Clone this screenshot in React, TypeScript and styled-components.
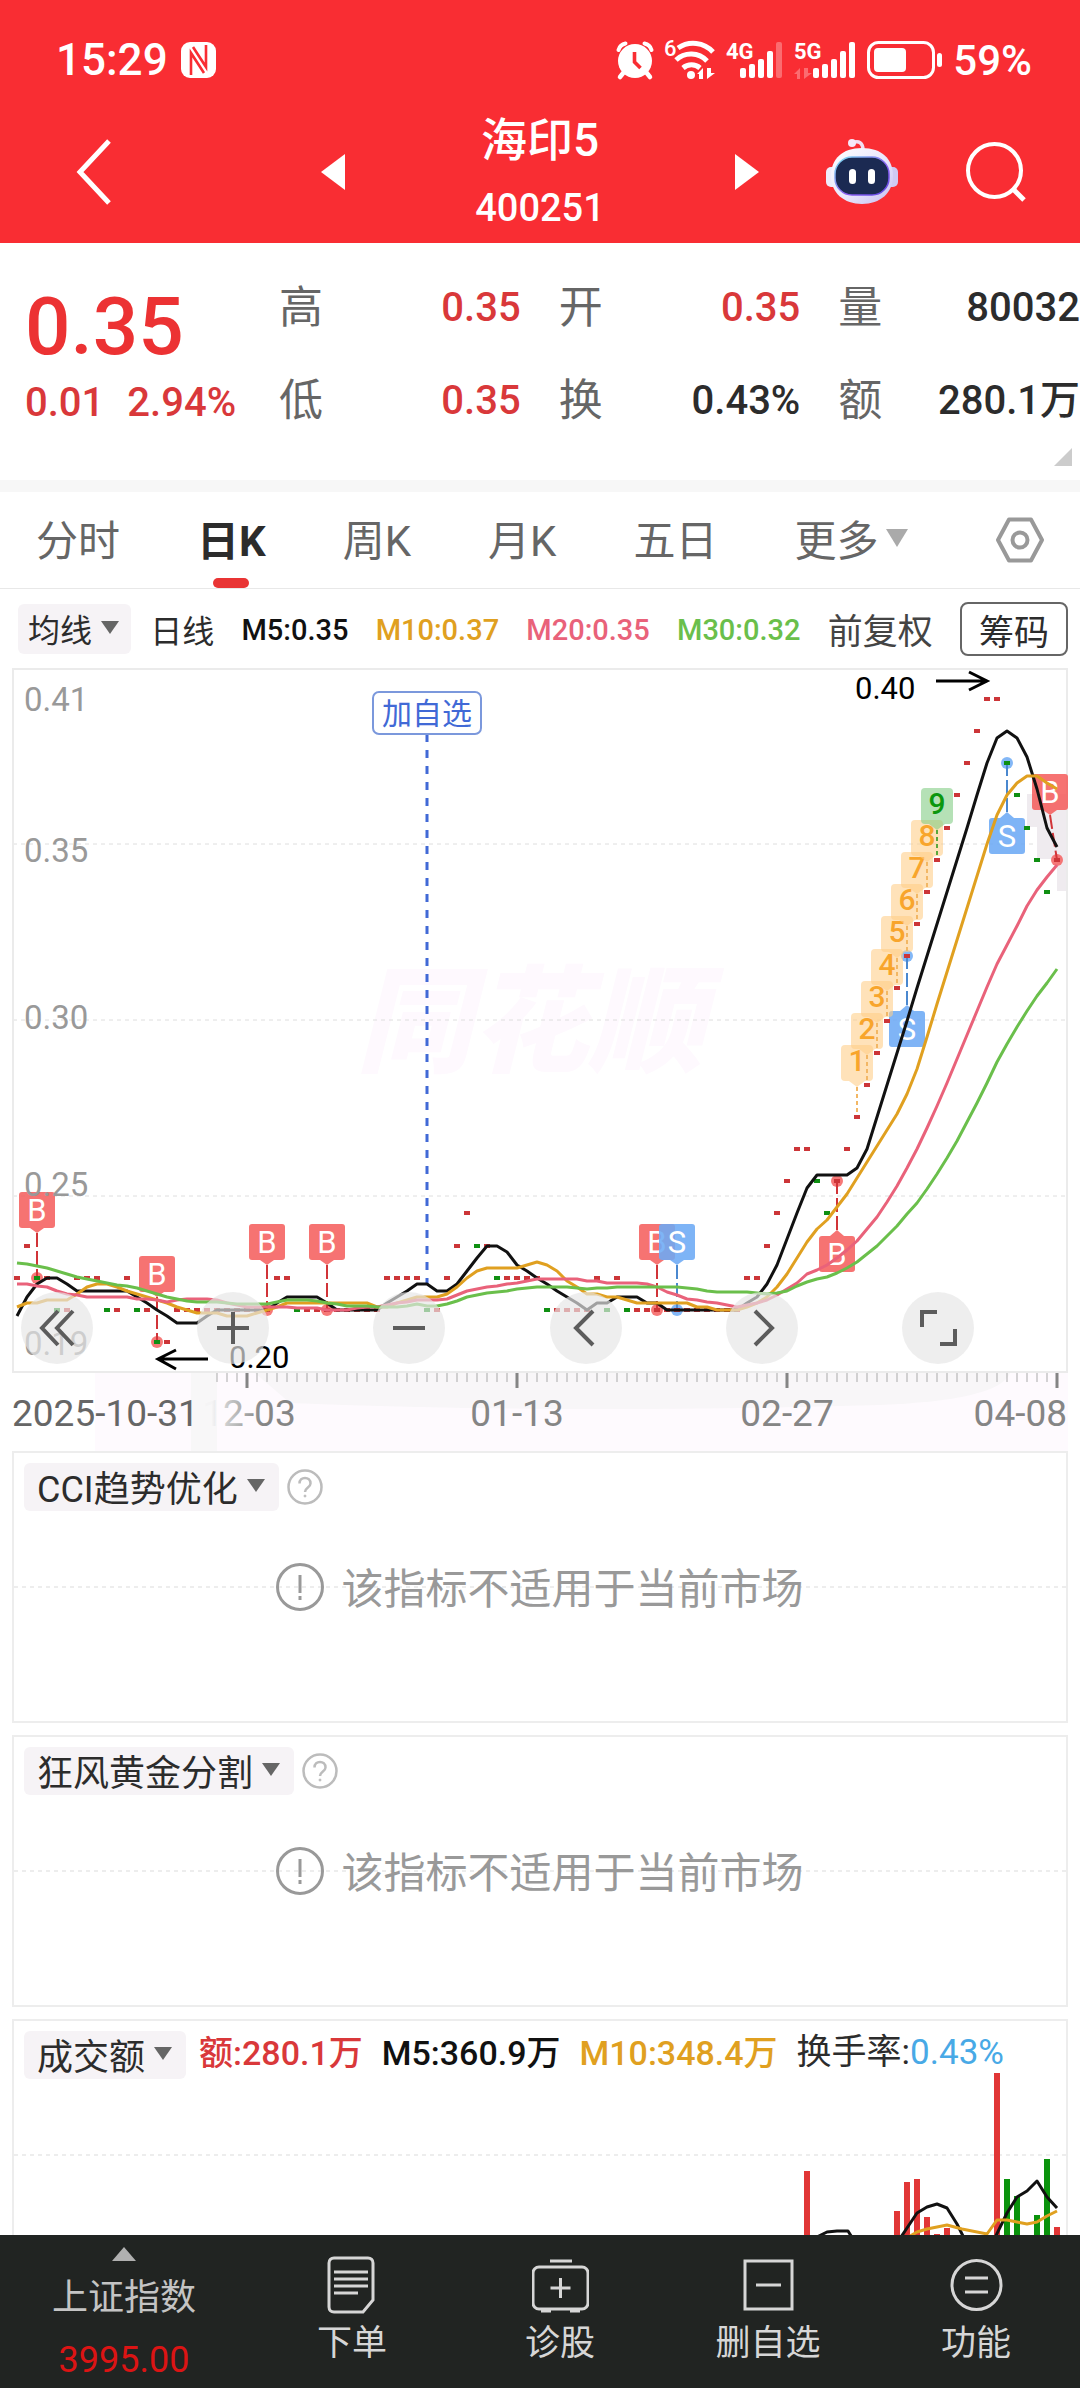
import React from "react";
import styled, { createGlobalStyle, css } from "styled-components";

const UP = "#d9383a";
const DOWN = "#0f8f12";
const AMBER = "#e0a020";
const PINK = "#e9627a";
const LIME = "#6abf4b";

const Global = createGlobalStyle`
  *, *::before, *::after { box-sizing: border-box; }
  body {
    margin: 0;
    background: #fff;
    color: #2c2c2c;
    font-family: Roboto, "Noto Sans CJK SC", sans-serif;
  }
  button {
    margin: 0;
    padding: 0;
    border: 0;
    background: none;
    color: inherit;
    font: inherit;
  }
  svg { display: block; }
`;

/* ---------- shell ---------- */

const Shell = styled.div`
  display: flex;
  flex-direction: column;
  height: 100vh;
`;

const Header = styled.header`
  flex: none;
  background: #f92d33;
  color: #fff;
`;

const StatusBar = styled.div`
  display: flex;
  align-items: center;
  justify-content: space-between;
  height: 100px;
  padding: 20px 48px 0 56px;
  font-weight: 500;
`;

const StatusGroup = styled.div<{ $gap: number; $size: number }>`
  display: flex;
  align-items: center;
  gap: ${(p) => p.$gap}px;
  font-size: ${(p) => p.$size}px;

  & > svg { overflow: visible; }
`;

const NavBar = styled.div`
  display: grid;
  grid-template-columns: 1fr auto 1fr;
  align-items: center;
  height: 143px;
  padding: 0 54px;
`;

const IconButton = styled.button<{ $width: number }>`
  display: flex;
  justify-content: center;
  width: ${(p) => p.$width}px;
`;

const StockSwitch = styled.div`
  display: flex;
  align-items: center;
  justify-content: space-between;
  width: 438px;
`;

const StockTitle = styled.h1`
  margin: 0;
  text-align: center;
  font-size: 46px;
  font-weight: 500;
  line-height: 72px;
`;

const StockCode = styled.span`
  display: block;
  font-size: 38px;
  line-height: 64px;
`;

const NavTools = styled.div`
  display: flex;
  align-items: center;
  justify-content: flex-end;
  gap: 68px;
`;

/* ---------- quote ---------- */

const Quote = styled.section`
  position: relative;
  display: grid;
  grid-template-columns: 279px 1fr;
  flex: none;
  height: 249px;
  border-bottom: 12px solid #f7f7f7;
`;

const PriceBlock = styled.div`
  padding: 36px 0 0 25px;
  color: ${UP};
  font-weight: 500;
`;

const Price = styled.div`
  color: #ec3233;
  font-size: 80px;
  line-height: 96px;
`;

const Change = styled.div`
  display: flex;
  gap: 23px;
  font-size: 40px;
  line-height: 56px;
`;

const Stats = styled.dl`
  display: grid;
  grid-template-columns: repeat(3, 1fr);
  grid-auto-rows: 93px;
  column-gap: 38px;
  margin: 0;
  padding-top: 18px;
`;

const Stat = styled.div`
  display: flex;
  align-items: center;
  justify-content: space-between;
`;

const StatName = styled.dt`
  color: #666;
  font-size: 44px;
  line-height: 60px;
`;

const StatValue = styled.dd<{ $up?: boolean }>`
  margin: 0;
  color: ${(p) => (p.$up ? UP : "#2c2c2c")};
  font-size: 40px;
  font-weight: 500;
  line-height: 60px;
`;

const Corner = styled.span`
  position: absolute;
  right: 8px;
  bottom: 14px;
  border-left: 18px solid transparent;
  border-bottom: 18px solid #ccc;
`;

/* ---------- tabs ---------- */

const Tabs = styled.nav`
  display: flex;
  flex: none;
  gap: 77px;
  height: 97px;
  padding: 0 36px;
  border-bottom: 1px solid #e8e8e8;
`;

const Tab = styled.button<{ $active?: boolean }>`
  position: relative;
  display: flex;
  align-items: center;
  gap: 8px;
  padding-bottom: 5px;
  color: #666;
  font-size: 42px;
  ${(p) =>
    p.$active &&
    css`
      color: #2c2c2c;
      font-weight: 700;
      &::after {
        content: "";
        position: absolute;
        bottom: 0;
        left: 50%;
        width: 36px;
        height: 10px;
        margin-left: -18px;
        border-radius: 5px;
        background: #e93434;
      }
    `}
`;

const SettingsButton = styled.button`
  margin-left: auto;
`;

const Caret = styled.span<{ $size?: number; $color?: string }>`
  width: 0;
  border: ${(p) => p.$size ?? 9}px solid transparent;
  border-bottom-width: 0;
  border-top: ${(p) => (p.$size ? 18 : 13)}px solid ${(p) => p.$color ?? "#666"};
`;

/* ---------- main ---------- */

const Main = styled.main`
  flex: 1;
  min-height: 0;
  padding: 0 12px;
  overflow: hidden;
`;

const Legend = styled.div`
  display: flex;
  align-items: center;
  justify-content: space-between;
  height: 79px;
  padding-left: 6px;
  font-size: 29px;
  font-weight: 500;
`;

const Chip = styled.button<{ $compact?: boolean }>`
  display: flex;
  flex: none;
  align-items: center;
  gap: 9px;
  height: ${(p) => (p.$compact ? 50 : 48)}px;
  margin-right: ${(p) => (p.$compact ? -8 : 0)}px;
  padding: ${(p) => (p.$compact ? "0 12px 2px 10px" : "0 14px 3px 13px")};
  border-radius: 6px;
  background: #f6f3f6;
  font-size: ${(p) => (p.$compact ? 32 : 36)}px;
  font-weight: 400;
`;

const Reading = styled.span<{ $color?: string }>`
  color: ${(p) => p.$color ?? "#111"};
  line-height: 40px;
  white-space: nowrap;
`;

const LegendReading = styled(Reading)`
  padding-top: 3px;
`;

const Period = styled.span`
  font-size: 32px;
  font-weight: 400;
`;

const AdjustButton = styled.button`
  color: #444;
  font-size: 35px;
  font-weight: 400;
`;

const OutlineButton = styled.button`
  height: 54px;
  padding: 0 17px 3px;
  border: 2px solid #666;
  border-radius: 8px;
  font-size: 35px;
  font-weight: 400;
`;

const ChartArea = styled.div`
  position: relative;
`;

const ChartSvg = styled.svg`
  width: 100%;
  height: auto;
`;

const ChartControls = styled.div`
  position: absolute;
  inset: auto 94px 87px 9px;
  display: flex;
  justify-content: space-between;
`;

const RoundButton = styled.button`
  display: grid;
  place-items: center;
  width: 72px;
  height: 72px;
  border-radius: 50%;
  background: rgba(230, 230, 230, 0.68);
`;

const Panel = styled.section`
  display: grid;
  grid-template-rows: 48px 1fr;
  height: 272px;
  margin-bottom: 12px;
  padding-top: 10px;
  border: 2px solid #ededed;
  background:
    repeating-linear-gradient(90deg, #ededed 0 4px, transparent 4px 8px) 0 50% / 100% 2px
    no-repeat padding-box;
`;

const PanelHead = styled.div`
  display: flex;
  align-items: center;
  gap: 8px;
  padding-left: 10px;
`;

const Notice = styled.p`
  display: flex;
  align-items: center;
  justify-content: center;
  gap: 17px;
  margin: 0;
  padding-bottom: 58px;
  color: #999;
  font-size: 42px;
`;

const NoticeText = styled.span`
  padding-bottom: 4px;
`;

const VolumePanel = styled.section`
  display: grid;
  grid-template-areas: "stack";
  align-items: start;
`;

const VolumeHead = styled.div`
  z-index: 1;
  display: flex;
  grid-area: stack;
  align-items: center;
  gap: 19px;
  height: 48px;
  margin: 12px 0 0 12px;
  font-size: 34px;
  font-weight: 500;

  & > button { margin-right: -6px; }
  & > span { padding-bottom: 5px; }
`;

const TurnoverRate = styled(Reading)`
  font-size: 35px;
  font-weight: 400;
`;

const VolumeSvg = styled.svg`
  grid-area: stack;
  width: 100%;
  height: auto;
`;

/* ---------- footer ---------- */

const Footer = styled.footer`
  display: grid;
  grid-template-columns: 248fr repeat(4, 208fr);
  flex: none;
  height: 153px;
  background: #212422;
  color: #d6d6d6;
`;

const FooterItem = styled.button`
  display: flex;
  flex-direction: column;
  align-items: center;
  padding-top: 21px;
  font-size: 35px;
  line-height: 56px;

  & > svg { margin-bottom: 2px; }
`;

const IndexItem = styled.button`
  display: flex;
  flex-direction: column;
  align-items: center;
  padding-top: 12px;
  color: #c4c4c4;
  font-size: 36px;
  line-height: 62px;
`;

const IndexCaret = styled.span`
  border: 12px solid transparent;
  border-top-width: 0;
  border-bottom: 14px solid #b0b0b0;
  margin-bottom: 6px;
`;

const IndexValue = styled.span`
  color: #dc1414;
`;

/* ---------- icons ---------- */

const NfcIcon = () => (
  <svg width="35" height="36" viewBox="0 0 35 36" fill="none">
    <rect width="35" height="36" rx="9" fill="#fff" />
    <path d="M10 33V11l13 20M25 3v22L12 5" stroke="#f92d33" strokeWidth="2.600" />
  </svg>
);

const AlarmIcon = () => (
  <svg width="38" height="38" viewBox="0 0 38 38">
    <g stroke="#fff" strokeLinecap="round" fill="none">
      <path d="M2.500 9a9 9 0 0 1 7-6.500M35.500 9a9 9 0 0 0-7-6.500" strokeWidth="4" />
      <path d="M8 31l-4 5M30 31l4 5" strokeWidth="4.500" />
    </g>
    <circle cx="19" cy="20" r="17" fill="#fff" />
    <path d="M18.500 11v10l6 6" stroke="#f92d33" strokeWidth="3.600" fill="none" />
  </svg>
);

const WifiIcon = () => (
  <svg width="52" height="42" viewBox="0 0 52 42" fill="none" stroke="#fff">
    <text x="0" y="17" fontSize="22" fontWeight="500" fill="#fff" stroke="none">6</text>
    <g strokeWidth="5">
      <path d="M14 9a27 27 0 0 1 35 4" />
      <path d="M12 21a22 22 0 0 1 31 1" />
      <path d="M19 29a13 13 0 0 1 17 0" />
    </g>
    <circle cx="27" cy="36" r="4" fill="#fff" stroke="none" />
    <path d="M33 35l6-6v11h-4v-5zM43 29v11l8-6h-4v-5z" fill="#fff" stroke="none" />
  </svg>
);

const SignalIcon = ({ label, weak }: { label: string; weak?: boolean }) => (
  <svg width={weak ? 58 : 63} height="40" viewBox={weak ? "0 0 58 40" : "0 0 63 40"} fill="#fff">
    <text x="0" y="19" fontSize="22" fontWeight="700">{label}</text>
    {!weak && <path d="M0 34l6-6v11H3v-5zM10 28v11l8-6h-4v-5z" opacity="0.3" />}
    {[28, 24, 19, 11, 2].map((y, i) => (
      <rect
        key={y}
        x={(weak ? 14 : 19) + i * 9}
        y={y}
        width="6"
        height={38 - y}
        rx="2"
        opacity={weak && i === 4 ? 0.3 : 1}
      />
    ))}
  </svg>
);

const BatteryIcon = () => (
  <svg width="76" height="38" viewBox="0 0 76 38" fill="none">
    <rect x="1.500" y="1.500" width="65" height="35" rx="10" stroke="#fff" strokeWidth="3" />
    <rect x="7" y="7" width="32" height="24" rx="4" fill="#fff" />
    <rect x="70" y="12" width="5" height="14" rx="2.500" fill="#fff" />
  </svg>
);

const BackIcon = () => (
  <svg width="36" height="66" viewBox="0 0 36 66" fill="none" stroke="#fff" strokeWidth="5">
    <path d="M33 2L4 33l29 31" />
  </svg>
);

const StepIcon = ({ next }: { next?: boolean }) => (
  <svg width="24" height="36" viewBox="0 0 24 36" fill="#fff">
    <path d={next ? "M0 0l24 18L0 36z" : "M24 0L0 18l24 18z"} />
  </svg>
);

const RobotIcon = () => (
  <svg width="72" height="67" viewBox="0 0 72 67">
    <defs>
      <linearGradient id="shell" x1="0" y1="0" x2="1" y2="1">
        <stop offset="0" stopColor="#fff" />
        <stop offset="0.55" stopColor="#e9e6fb" />
        <stop offset="1" stopColor="#c4bdf0" />
      </linearGradient>
      <linearGradient id="rim" x1="0" y1="0" x2="1" y2="1">
        <stop offset="0" stopColor="#7fe3f2" />
        <stop offset="0.6" stopColor="#8a5cf0" />
        <stop offset="1" stopColor="#5b46e0" />
      </linearGradient>
    </defs>
    <rect x="0" y="29" width="12" height="20" rx="5" fill="#efecfb" />
    <rect x="60" y="29" width="12" height="20" rx="5" fill="#cfc9f2" />
    <path d="M26 5c7-3 11 0 11 7" stroke="#f2dff2" strokeWidth="3.500" fill="none" />
    <circle cx="26" cy="5" r="4" fill="#f6e8f8" />
    <path d="M36 10c20 0 31 11 31 28S54 66 36 66 5 55 5 38 16 10 36 10z" fill="url(#shell)" />
    <rect x="9" y="19" width="54" height="38" rx="17" fill="#1b2a52" stroke="url(#rim)" strokeWidth="1.500" />
    <rect x="23" y="31" width="7" height="15" rx="3.500" fill="#fff" />
    <rect x="42" y="31" width="7" height="15" rx="3.500" fill="#fff" />
  </svg>
);

const SearchIcon = () => (
  <svg width="60" height="60" viewBox="0 0 60 60" fill="none" stroke="#fff" strokeWidth="4">
    <circle cx="28.500" cy="28.500" r="26.500" />
    <path d="M47 47l11 11" strokeWidth="5" />
  </svg>
);

const HexIcon = () => (
  <svg width="48" height="46" viewBox="0 0 48 46" fill="none" stroke="#999" strokeWidth="4" strokeLinejoin="round">
    <path d="M13 2.500h22L46 23 35 43.500H13L2 23z" />
    <circle cx="24" cy="23" r="7.500" />
  </svg>
);

const HelpIcon = () => (
  <svg width="36" height="36" viewBox="0 0 36 36" fill="none" stroke="#bcbcbc" strokeWidth="2.500">
    <circle cx="18" cy="18" r="16.500" />
    <path d="M12.500 14.500c0-7.500 11-7.500 11 0 0 4-5.500 4-5.500 8.500" />
    <circle cx="18" cy="27" r="1" fill="#bcbcbc" strokeWidth="1" />
  </svg>
);

const AlertIcon = () => (
  <svg width="48" height="48" viewBox="0 0 48 48" fill="none" stroke="#999" strokeWidth="3">
    <circle cx="24" cy="24" r="22.500" />
    <path d="M24 12v18M24 33v4" />
  </svg>
);

const controlPaths: [string, string][] = [
  ["后退", "M20 2L4 19l16 17M35 2L19 19l16 17"],
  ["放大", "M19 3v32M3 19h32"],
  ["缩小", "M3 19h32"],
  ["左移", "M26 2L9 19l17 17"],
  ["右移", "M12 2l17 17-17 17"],
  ["全屏", "M3 18V3h15M36 20v15H21"],
];

const footerItems: [string, React.ReactNode][] = [
  [
    "下单",
    <g key="i">
      <path d="M10 2h34c3 0 5 2 5 5v37l-10 12H10c-3 0-5-2-5-5V7c0-3 2-5 5-5z" />
      <path d="M10 16h34M10 23h34M10 30h34M10 37h24" />
    </g>,
  ],
  [
    "诊股",
    <g key="i">
      <rect x="1" y="11" width="55" height="42" rx="6" />
      <path d="M18 5h22M9 55h10M38 55h10M28.500 22v20M18.500 32h20" />
    </g>,
  ],
  [
    "删自选",
    <g key="i">
      <rect x="5" y="5" width="47" height="48" />
      <path d="M16 29h25" />
    </g>,
  ],
  [
    "功能",
    <g key="i">
      <circle cx="28.500" cy="29" r="24.500" />
      <path d="M17 22h23M17 36h23" />
    </g>,
  ],
];

/* ---------- price chart ---------- */

// Closing prices in cents above 0.20; "g" marks a falling day.
const HISTORY = [4, 4, 4, 4, 4, 4, 4, 4, 3, 3, 3, 3, 3, 3, 3, 3, 3, 2, 1, 1, 2, 2, 1, 1, 1, 0, 0, 1, 1];
const DAYS =
  "2 3 2g 2 1g 1 2 2 2 1g 1 2 1g 1 0g 0 1 1 1 1 1 1 1 1 1 1 2 2 1g 1 1 1 1 1 1 1 1 2 2 2 2 1g 1 2 3 4 3g 3 2g 2 2 2 2 1g 1 1 1 1 2 1g 2 1g 1 1 1 1 1 1 1 1 1 1 1 2 2 3 4 5 6 6 5g 4g 5 6 7 8 9 10 11 12 13 14 15 16 17 18 19 20 20 18g 17g 16g 15g 14g 15"
    .split(" ")
    .map((d) => ({ value: parseInt(d, 10), down: d.endsWith("g") }));

const dayX = (i: number) => 17 + i * 10;
const priceY = (v: number) => Math.round(1342 - v * 32.15);

const average = (span: number) => {
  const all = [...HISTORY, ...DAYS.map((d) => d.value)];
  return DAYS.map((_, i) => {
    const end = i + HISTORY.length + 1;
    const slice = all.slice(Math.max(0, end - span), end);
    const mean = slice.reduce((a, b) => a + b, 0) / slice.length;
    return `${dayX(i)},${priceY(mean)}`;
  }).join(" ");
};

const trades: { kind: "B" | "S"; day: number; top: number; x?: number }[] = [
  { kind: "B", day: 2, top: 1192 },
  { kind: "B", day: 14, top: 1256 },
  { kind: "B", day: 25, top: 1224 },
  { kind: "B", day: 31, top: 1224 },
  { kind: "B", day: 64, top: 1224 },
  { kind: "S", day: 66, top: 1224 },
  { kind: "B", day: 82, top: 1236 },
  { kind: "S", day: 89, top: 1011 },
  { kind: "S", day: 99, top: 818 },
  { kind: "B", day: 104, top: 774, x: 1050 },
];

const Trade = ({ kind, day, top, x }: (typeof trades)[number]) => {
  const px = dayX(day);
  const cx = x ?? px;
  const py = priceY(DAYS[day].value);
  const above = top < py;
  const tip = above ? top + 41 : top - 6;
  const base = above ? top + 36 : top;
  const fill = kind === "B" ? "#f5605f" : "#6daaf5";
  const line = kind === "B" ? "#d13438" : "#4a88cf";
  return (
    <g>
      <circle cx={px} cy={py} r="6" fill={fill} opacity="0.85" />
      <path d={`M${cx} ${tip}L${px} ${py}`} stroke={line} strokeWidth="2" strokeDasharray="14 4" />
      <g fill={fill} opacity="0.88">
        <rect x={cx - 18} y={top} width="36" height="36" rx="3" />
        <path d={`M${cx - 7} ${base}h14L${cx} ${tip}z`} />
      </g>
      <text x={cx} y={top + 29} fontSize="31" fill="#fff" textAnchor="middle">{kind}</text>
    </g>
  );
};

const Streak = ({ n }: { n: number }) => {
  const x = dayX(83 + n);
  const y = priceY(DAYS[83 + n].value);
  const last = n === 9;
  const fill = last ? "#80cc82" : "#ffce87";
  return (
    <g>
      <path d={`M${x} ${y - 30}V${y - 3}`} stroke={last ? "#5aa83c" : "#f2b765"} strokeWidth="2" strokeDasharray="4 3" />
      <g fill={fill} opacity="0.58">
        <rect x={x - 16} y={y - 72} width="32" height="36" rx="4" />
        <path d={`M${x - 8} ${y - 36}h16l-8 6z`} />
      </g>
      <text x={x} y={y - 46} fontSize="30" fontWeight="500" textAnchor="middle" fill={last ? "#0b970e" : "#f8a52c"}>
        {n}
      </text>
    </g>
  );
};

const PriceChart = () => (
  <ChartSvg viewBox="12 668 1056 783" role="img" aria-label="日K线图">
    <defs>
      <linearGradient id="dateFade" gradientUnits="userSpaceOnUse" x1="212" y1="0" x2="262" y2="0">
        <stop offset="0" stopColor="#f5f4f5" />
        <stop offset="0.3" stopColor="#ccc" />
        <stop offset="1" stopColor="#858585" />
      </linearGradient>
    </defs>
    <rect x="95" y="1373" width="973" height="78" fill="#fefafe" />
    <path d="M255 1373H1010Q1000 1400 880 1405Q560 1414 290 1403Z" fill="#f8f6f8" />
    <rect x="191" y="1373" width="26" height="78" fill="#f8f7f8" />
    <text x="530" y="1063" fontSize="116" fontWeight="900" fontStyle="italic" fill="#fef9fe" textAnchor="middle">
      同花顺
    </text>
    <path d="M13 844H1066M13 1020H1066M13 1196H1066" stroke="#dedede" strokeDasharray="4 4" />
    <path d="M1027 794h40v97h-10v-32h-20v-32h-10z" fill="#efebef" />
    <rect x="13" y="669" width="1054" height="703" fill="none" stroke="#ebebeb" strokeWidth="2" />

    <path d="M427 734V1284" stroke="#4169d6" strokeWidth="3" strokeDasharray="8 8" />
    <rect x="373" y="692" width="108" height="42" rx="6" fill="#fff" stroke="#7b98dc" strokeWidth="2" />
    <text x="427" y="724" fontSize="30" fill="#4169d6" textAnchor="middle">加自选</text>

    {trades.map((t) => (
      <Trade key={t.day} {...t} />
    ))}
    {DAYS.map((d, i) => (
      <rect key={i} x={dayX(i) - 3} y={priceY(d.value) - 2} width="6" height="4" fill={d.down ? DOWN : "#cc3538"} />
    ))}
    {[1, 2, 3, 4, 5, 6, 7, 8, 9].map((n) => (
      <Streak key={n} n={n} />
    ))}

    <g fontSize="33" fill="#999">
      <text x="24" y="711">0.41</text>
      <text x="24" y="862">0.35</text>
      <text x="24" y="1029">0.30</text>
      <text x="24" y="1196">0.25</text>
      <text x="24" y="1355">0.19</text>
    </g>

    <g fill="none" strokeWidth="3" strokeLinejoin="round">
      <polyline points={average(5)} stroke="#111" />
      <polyline points={average(10)} stroke={AMBER} />
      <polyline points={average(20)} stroke={PINK} />
      <polyline points={average(30)} stroke={LIME} />
    </g>

    <g fontSize="31" fill="#000">
      <text x="855" y="699">0.40</text>
      <text x="229" y="1368">0.20</text>
    </g>
    <path
      d="M936 681H986M969 672l18 9-18 9M208 1359H158M176 1350l-18 9 18 10"
      fill="none"
      stroke="#000"
      strokeWidth="3"
    />

    {Array.from({ length: 85 }, (_, i) => {
      const major = (i - 3) % 27 === 0;
      return (
        <path
          key={i}
          d={`M${217 + i * 10} 1373v${major ? 15 : 9}`}
          stroke={major ? "#858585" : "#aaa"}
          strokeWidth={major ? 3 : 1}
        />
      );
    })}

    <g fontSize="37" fill="#858585" textAnchor="middle">
      <text x="249" y="1426" fill="url(#dateFade)">12-03</text>
      <text x="517" y="1426">01-13</text>
      <text x="787" y="1426">02-27</text>
      <text x="1067" y="1426" textAnchor="end">04-08</text>
      <text x="12" y="1426" textAnchor="start" fill="#666">2025-10-31</text>
    </g>
  </ChartSvg>
);

/* ---------- turnover chart ---------- */

const turnover: [number, number, boolean?][] = [
  [807, 2171],
  [897, 2211],
  [907, 2182],
  [917, 2179],
  [927, 2217],
  [937, 2234],
  [947, 2228],
  [997, 2073],
  [1007, 2179, true],
  [1017, 2196, true],
  [1037, 2215, true],
  [1047, 2159, true],
  [1057, 2227],
];

const TurnoverChart = () => (
  <VolumeSvg viewBox="12 2019 1056 272" role="img" aria-label="成交额图">
    <rect x="13" y="2020" width="1054" height="270" fill="none" stroke="#ededed" strokeWidth="2" />
    <path d="M14 2155H1066" stroke="#ededed" strokeWidth="2" strokeDasharray="4 4" />
    {turnover.map(([x, y, down]) => (
      <rect key={x} x={x - 3} y={y} width="6" height={2290 - y} fill={down ? "#0a930c" : "#e13636"} />
    ))}
    <g fill="none" strokeWidth="3" strokeLinejoin="round">
      <path
        stroke="#111"
        d="M817 2237l10-5 10-1h11l10 16M897 2243l10-15 10-15 10-6 10-3 10 4 10 16 10 20M990 2248l17-35 10-16 10-6 10-10 10 16 10 11"
      />
      <path stroke={AMBER} d="M900 2242l17-10 10-3 10-2 10-2 15 4 25 5 10-14h10l10 2 10 2 10-2 10-6 10-5" />
    </g>
  </VolumeSvg>
);

/* ---------- page ---------- */

const stats: [string, string, boolean?][] = [
  ["高", "0.35", true],
  ["开", "0.35", true],
  ["量", "80032"],
  ["低", "0.35", true],
  ["换", "0.43%"],
  ["额", "280.1万"],
];

const EmptyIndicator = ({ name }: { name: string }) => (
  <Panel>
    <PanelHead>
      <Chip>
        {name}
        <Caret />
      </Chip>
      <button aria-label={`${name}说明`}>
        <HelpIcon />
      </button>
    </PanelHead>
    <Notice>
      <AlertIcon />
      <NoticeText>该指标不适用于当前市场</NoticeText>
    </Notice>
  </Panel>
);

export default function App() {
  return (
    <Shell lang="zh-CN">
      <Global />
      <Header>
        <StatusBar>
          <StatusGroup $gap={13} $size={44}>
            <span>15:29</span>
            <NfcIcon />
          </StatusGroup>
          <StatusGroup $gap={10} $size={42}>
            <AlarmIcon />
            <WifiIcon />
            <SignalIcon label="4G" weak />
            <SignalIcon label="5G" />
            <BatteryIcon />
            <span>59%</span>
          </StatusGroup>
        </StatusBar>
        <NavBar>
          <IconButton $width={80} aria-label="返回">
            <BackIcon />
          </IconButton>
          <StockSwitch>
            <IconButton $width={24} aria-label="上一只">
              <StepIcon />
            </IconButton>
            <StockTitle>
              海印5
              <StockCode>400251</StockCode>
            </StockTitle>
            <IconButton $width={24} aria-label="下一只">
              <StepIcon next />
            </IconButton>
          </StockSwitch>
          <NavTools>
            <IconButton $width={72} aria-label="智能助手">
              <RobotIcon />
            </IconButton>
            <IconButton $width={60} aria-label="搜索">
              <SearchIcon />
            </IconButton>
          </NavTools>
        </NavBar>
      </Header>

      <Quote>
        <PriceBlock>
          <Price>0.35</Price>
          <Change>
            <span>0.01</span>
            <span>2.94%</span>
          </Change>
        </PriceBlock>
        <Stats>
          {stats.map(([name, value, up]) => (
            <Stat key={name}>
              <StatName>{name}</StatName>
              <StatValue $up={up}>{value}</StatValue>
            </Stat>
          ))}
        </Stats>
        <Corner />
      </Quote>

      <Tabs>
        <Tab>分时</Tab>
        <Tab $active>日K</Tab>
        <Tab>周K</Tab>
        <Tab>月K</Tab>
        <Tab>五日</Tab>
        <Tab>
          更多
          <Caret $size={11} $color="#aaa" />
        </Tab>
        <SettingsButton aria-label="设置">
          <HexIcon />
        </SettingsButton>
      </Tabs>

      <Main>
        <Legend>
          <Chip $compact>
            均线
            <Caret />
          </Chip>
          <Period>日线</Period>
          <LegendReading>M5:0.35</LegendReading>
          <LegendReading $color={AMBER}>M10:0.37</LegendReading>
          <LegendReading $color={PINK}>M20:0.35</LegendReading>
          <LegendReading $color={LIME}>M30:0.32</LegendReading>
          <AdjustButton>前复权</AdjustButton>
          <OutlineButton>筹码</OutlineButton>
        </Legend>

        <ChartArea>
          <PriceChart />
          <ChartControls>
            {controlPaths.map(([label, d]) => (
              <RoundButton key={label} aria-label={label}>
                <svg width="38" height="38" viewBox="0 0 38 38" fill="none" stroke="#5c5c5c" strokeWidth="4">
                  <path d={d} />
                </svg>
              </RoundButton>
            ))}
          </ChartControls>
        </ChartArea>

        <EmptyIndicator name="CCI趋势优化" />
        <EmptyIndicator name="狂风黄金分割" />

        <VolumePanel>
          <VolumeHead>
            <Chip>
              成交额
              <Caret />
            </Chip>
            <Reading $color={UP}>额:280.1万</Reading>
            <Reading>M5:360.9万</Reading>
            <Reading $color={AMBER}>M10:348.4万</Reading>
            <TurnoverRate $color="#2c2c2c">
              换手率:<Reading $color="#48a9e6">0.43%</Reading>
            </TurnoverRate>
          </VolumeHead>
          <TurnoverChart />
        </VolumePanel>
      </Main>

      <Footer>
        <IndexItem>
          <IndexCaret />
          上证指数
          <IndexValue>3995.00</IndexValue>
        </IndexItem>
        {footerItems.map(([label, icon]) => (
          <FooterItem key={label}>
            <svg width="57" height="58" viewBox="0 0 57 58" fill="none" stroke="#d6d6d6" strokeWidth="3">
              {icon}
            </svg>
            {label}
          </FooterItem>
        ))}
      </Footer>
    </Shell>
  );
}
